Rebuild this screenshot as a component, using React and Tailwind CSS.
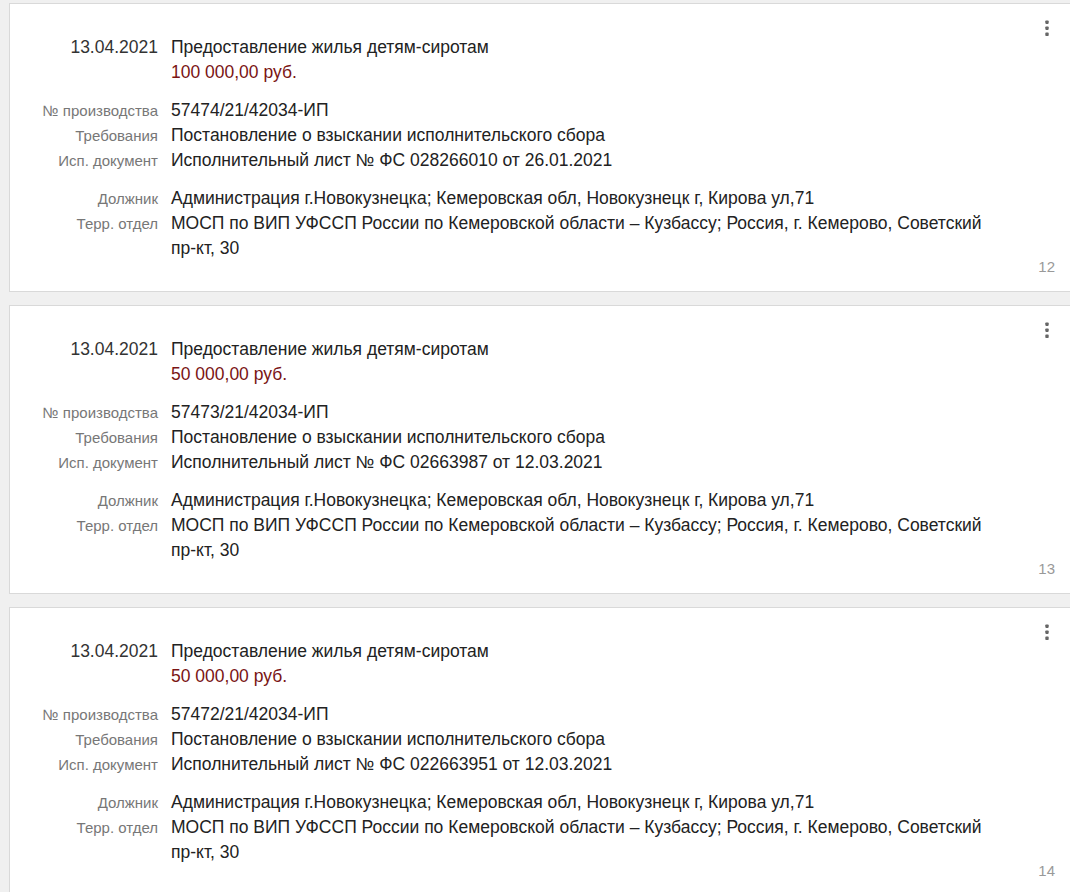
const items = [
  {
    date: '13.04.2021',
    amount: '100 000,00 руб.',
    number: '57474/21/42034-ИП',
    doc: 'Исполнительный лист № ФС 028266010 от 26.01.2021',
    page: 12,
  },
  {
    date: '13.04.2021',
    amount: '50 000,00 руб.',
    number: '57473/21/42034-ИП',
    doc: 'Исполнительный лист № ФС 02663987 от 12.03.2021',
    page: 13,
  },
  {
    date: '13.04.2021',
    amount: '50 000,00 руб.',
    number: '57472/21/42034-ИП',
    doc: 'Исполнительный лист № ФС 022663951 от 12.03.2021',
    page: 14,
  },
];

function Row({ label, children, className = '' }) {
  return (
    <div className="flex gap-[13px] leading-[25px]">
      <div className="w-[148px] shrink-0 text-right text-[15px] text-[#777]">{label}</div>
      <div className={'flex-1 text-[17.5px] ' + className}>{children}</div>
    </div>
  );
}

function Kebab() {
  return (
    <svg width="16" height="20" viewBox="0 0 16 20" fill="#666">
      <rect x="6.3" y="2.5" width="3.4" height="3.4" rx="0.8" />
      <rect x="6.3" y="8.5" width="3.4" height="3.4" rx="0.8" />
      <rect x="6.3" y="14.6" width="3.4" height="3.4" rx="0.8" />
    </svg>
  );
}

function Card({ item }) {
  return (
    <div className="flex bg-white border border-r-0 border-[#d9d9d9]">
      <div className="flex-1 pt-[31px] pb-[30px] pr-[30px] text-[#222]">
        <Row label={<span className="text-[17.5px] text-[#333]">{item.date}</span>}>
          Предоставление жилья детям-сиротам
        </Row>
        <Row label="" className="text-[#7a1414]">{item.amount}</Row>

        <div className="mt-[13px]">
          <Row label="№ производства">{item.number}</Row>
          <Row label="Требования">Постановление о взыскании исполнительского сбора</Row>
          <Row label="Исп. документ">{item.doc}</Row>
        </div>

        <div className="mt-[13px]">
          <Row label="Должник">
            Администрация г.Новокузнецка; Кемеровская обл, Новокузнецк г, Кирова ул,71
          </Row>
          <Row label="Терр. отдел">
            МОСП по ВИП УФССП России по Кемеровской области – Кузбассу; Россия, г. Кемерово, Советский пр-кт, 30
          </Row>
        </div>
      </div>
      <div className="flex flex-col items-end justify-between pt-[14px] pb-[14px] pr-[15px]">
        <Kebab />
        <span className="text-[15px] leading-[20px] text-[#999]">{item.page}</span>
      </div>
    </div>
  );
}

export default function App() {
  return (
    <div
      className="min-h-screen bg-[#f0f0f0] pl-[9px] pt-[3px] flex flex-col gap-[13px] overflow-hidden"
      style={{ fontFamily: '"Liberation Sans", Arial, sans-serif' }}
    >
      {items.map((item) => (
        <Card key={item.page} item={item} />
      ))}
    </div>
  );
}
